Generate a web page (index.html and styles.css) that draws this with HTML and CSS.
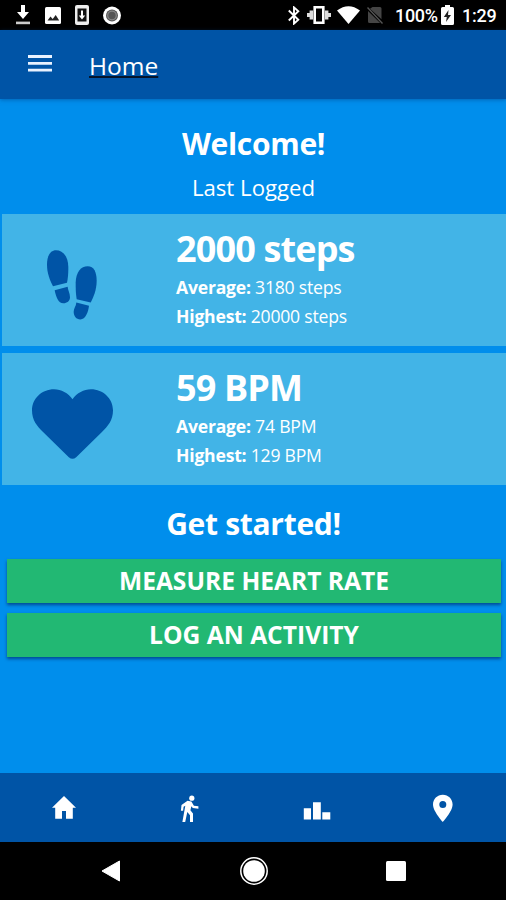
FILE: index.html
```
<!DOCTYPE html>
<html lang="en">
<head>
  <meta charset="UTF-8">
  <meta name="viewport" content="width=device-width, initial-scale=1">
  <title>Home</title>
  <link rel="stylesheet" href="styles.css">
</head>
<body>

  <!-- Status bar -->
  <div class="status-bar">
    <div class="status-left">
      <svg width="16" height="20" viewBox="0 0 16 20"><path d="M6 0h4v7h4l-6 7-6-7h4z" fill="#fff"/><path d="M1 16.6h14v2.6H1z" fill="#ccc"/></svg>
      <svg width="16" height="17" viewBox="0 0 16 17"><rect width="16" height="17" rx="1.5" fill="#fff"/><path d="M2.5 13.5l3-4 2.2 2.4 3-3.9 3.500 5.500z" fill="#222"/></svg>
      <svg width="14" height="20" viewBox="0 0 14 20"><rect width="14" height="20" rx="2" fill="#eee"/><path d="M2.5 3.5h9v13h-9z" fill="#111"/><path d="M6 5.5h2v5h2.2L7 14.5l-3.2-4H6z" fill="#fff"/></svg>
      <svg width="18" height="19" viewBox="0 0 18 19"><circle cx="9" cy="9.5" r="9" fill="#fff"/><circle cx="9" cy="9.5" r="6" fill="#555"/><circle cx="9" cy="9.5" r="4.3" fill="none" stroke="#888" stroke-width="1.2"/></svg>
    </div>
    <div class="status-right">
      <svg class="bluetooth" width="12" height="19" viewBox="0 0 12 19"><path d="M.8 4.5l9.5 9.3L6 17.6V1.4l4.3 3.8-9.500 9.300" fill="none" stroke="#fff" stroke-width="1.9"/></svg>
      <svg class="vibrate" width="24" height="18" viewBox="0 0 24 18"><path d="M7.700 1.300h8.600v15.400H7.700z" fill="none" stroke="#fff" stroke-width="2.600"/><path d="M2.600 4.500H6v9H2.600zM18 4.500h3.400v9H18zM0 7h2.700v4H0zM21.300 7H24v4h-2.700z" fill="#ddd"/></svg>
      <svg class="wifi" width="23" height="18" viewBox="0 0 23 18"><path d="M0 4.500Q11.500-4 23 4.500L11.500 18z" fill="#fff"/></svg>
      <svg class="no-sim" width="16" height="18" viewBox="0 0 16 18"><path d="M5.500 1H13q1.500 0 1.500 1.500v10.800L3 2.800zM1 5l12.200 12H2.500Q1 17 1 15.500z" fill="#454545"/><path d="M.5 1.500L15.500 17.500" stroke="#555" stroke-width="1.300"/></svg>
      <span class="percent">100%</span>
      <svg class="battery" width="13" height="20" viewBox="0 0 13 20"><path d="M4 0h5v2h2.500Q13 2 13 3.500v15q0 1.500-1.500 1.500h-10Q0 20 0 18.500v-15Q0 2 1.500 2H4z" fill="#fff"/><path d="M7.500 5L2.800 12h3L5 17l5-7H7z" fill="#222"/></svg>
      <span class="clock">1:29</span>
    </div>
  </div>

  <!-- App header -->
  <header class="header">
    <svg class="menu-icon" width="24" height="17" viewBox="0 0 24 17"><path d="M0 0h24v2.900H0zM0 6.900h24v2.900H0zM0 13.700h24v2.900H0z" fill="#e9f2ff"/></svg>
    <h1>Home</h1>
  </header>

  <main class="content">
    <h2 class="welcome">Welcome!</h2>
    <p class="last-logged">Last Logged</p>

    <section class="card">
      <div class="card-icon steps">
        <svg width="50" height="70" viewBox="141 420 150 209" fill="#0054a6">
          <path d="M168 420C149 420 141 440 141 463C141 490 150 511 159 528L201 518C204 503 205 490 205 472C205 438 188 420 168 420z"/>
          <path d="M164 540L203 530C203 538 210 550 210 561C210 572 201 579 190 579C175 579 168 560 164 540z"/>
          <path d="M263 468C282 468 290 486 290 512C290 540 280 562 272 577L230 567C227 548 227 534 227 517C228 485 243 468 263 468z"/>
          <path d="M229 577L267 587C265 605 257 628 241 628C229 628 221 618 221 605C221 594 228 589 229 577z"/>
        </svg>
      </div>
      <div class="card-text">
        <h3>2000 steps</h3>
        <p><b>Average:</b> 3180 steps</p>
        <p><b>Highest:</b> 20000 steps</p>
      </div>
    </section>

    <section class="card">
      <div class="card-icon">
        <svg width="81" height="70" viewBox="97 147 242 208" fill="#0054a6">
          <path d="M218 177C205 158 184 147 163 147C126 147 97 175 97 210C97 240 112 257 130 275L207 350Q218 360 229 350L306 275C324 257 339 240 339 210C339 175 310 147 273 147C252 147 231 158 218 177z"/>
        </svg>
      </div>
      <div class="card-text">
        <h3>59 BPM</h3>
        <p><b>Average:</b> 74 BPM</p>
        <p><b>Highest:</b> 129 BPM</p>
      </div>
    </section>

    <h2 class="get-started">Get started!</h2>
    <button class="btn measure">MEASURE HEART RATE</button>
    <button class="btn log">LOG AN ACTIVITY</button>
  </main>

  <!-- Tabs -->
  <nav class="tabs">
    <a><svg width="28" height="28" viewBox="0 0 28 28"><path d="M14 2L2 13.700h3.200v11H12V17h4v7.700h6.800v-11H26z" fill="#fff"/></svg></a>
    <a><svg width="28" height="28" viewBox="0 0 28 28"><circle cx="15.800" cy="4.200" r="2.600" fill="#fff"/><path d="M11.500 6.800l3.900.6 2.500 4.300 4.500.5v2.500l-5.600-.7-1.400-1.700-1 4 2.600 3.200v9H14v-7.300l-2.700-3.200-2.200 10.500H6.300l3-16.700-1.700 1-.5 4H4.900l.6-5.900z" fill="#fff"/></svg></a>
    <a><svg width="28" height="28" viewBox="0 0 28 28"><path d="M.8 14.200H8v11.300H.8zM10 8.200h7.800v17.300H10zM19.300 18.200h8v7.300h-8z" fill="#fff"/></svg></a>
    <a><svg width="28" height="29" viewBox="0 0 28 29"><path fill-rule="evenodd" d="M13.800 1.800C8.300 1.800 4 6 4 11.600C4 18.500 13.800 29 13.800 29S23.600 18.500 23.600 11.600C23.600 6 19.300 1.800 13.800 1.800zM13.800 8a3.500 3.500 0 1 1 0 7 3.500 3.500 0 1 1 0-7z" fill="#fff"/></svg></a>
  </nav>

  <!-- System buttons -->
  <div class="system-nav">
    <svg width="20" height="22" viewBox="0 0 20 22"><path d="M18.500 1v20L1 11z" fill="#fff" stroke="#fff" stroke-width="1" stroke-linejoin="round"/></svg>
    <svg width="30" height="30" viewBox="0 0 30 30"><circle cx="15" cy="15" r="13.200" fill="none" stroke="#fff" stroke-width="1.500"/><circle cx="15" cy="15" r="10.800" fill="#fff"/></svg>
    <svg width="20" height="20" viewBox="0 0 20 20"><rect width="20" height="20" rx="1.500" fill="#fff"/></svg>
  </div>

</body>
</html>
```
FILE: styles.css
```
* {
  box-sizing: border-box;
}

body {
  margin: 0;
  height: 900px;
  display: flex;
  flex-direction: column;
  font-family: 'Open Sans', 'Noto Sans', sans-serif;
  color: #fff;
  background: #008eec;
  overflow: hidden;
}

h1, h2, h3, p {
  margin: 0;
}

svg {
  display: block;
  flex: none;
}

/* Status bar */
.status-bar {
  height: 30px;
  flex: none;
  display: flex;
  justify-content: space-between;
  align-items: center;
  padding: 0 10px 0 15px;
  background: #000;
  font-family: Roboto, sans-serif;
  font-size: 18px;
  font-weight: 500;
}

.status-left,
.status-right {
  display: flex;
  align-items: center;
}

.status-left {
  gap: 14px;
}

.wifi {
  margin-left: 6px;
}

.vibrate {
  margin-left: 7px;
}

.no-sim {
  margin-left: 7px;
}

.percent {
  width: 43px;
  margin-left: 12px;
  letter-spacing: -0.3px;
}

.battery {
  margin-left: 3px;
}

.clock {
  width: 34px;
  margin-left: 8px;
  letter-spacing: -0.2px;
}

/* Header */
.header {
  height: 69px;
  flex: none;
  display: flex;
  align-items: center;
  padding: 0 28px;
  background: #0054a6;
  box-shadow: 0 1px 4px rgba(0, 60, 130, 0.5);
  z-index: 1;
}

.menu-icon {
  margin-top: -3px;
}

.header h1 {
  margin: 2px 0 0 37px;
  font-size: 24.5px;
  font-weight: 400;
  line-height: 33px;
  text-decoration: underline;
  text-decoration-color: #06152b;
  text-decoration-thickness: 2px;
  text-underline-offset: 1px;
}

/* Page content */
.content {
  flex: 1;
  padding-top: 24px;
  text-align: center;
}

.content h2 {
  padding-left: 1px;
  font-size: 30px;
  font-weight: 700;
  line-height: 41px;
  letter-spacing: -0.3px;
}

.last-logged {
  margin-top: 9px;
  padding-left: 1px;
  font-size: 22.2px;
  line-height: 30px;
}

.card {
  display: flex;
  height: 132px;
  margin: 11px 0 0 2px;
  background: #42b4e7;
  text-align: left;
}

.card + .card {
  margin-top: 7px;
}

.card-icon {
  width: 141px;
  display: flex;
  align-items: center;
  justify-content: center;
  padding-top: 9px;
}

.card-icon.steps {
  padding-right: 2px;
}

.card-text {
  padding: 10px 0 0 33px;
}

.card h3 {
  font-size: 36px;
  font-weight: 700;
  line-height: 49px;
  letter-spacing: -0.85px;
}

.card p {
  font-size: 17.6px;
  line-height: 29px;
  letter-spacing: -0.22px;
}

.content .get-started {
  margin-top: 18px;
}

.btn {
  display: block;
  width: 494px;
  height: 44px;
  margin: 15px 0 0 7px;
  padding: 0 0 1px;
  border: none;
  background: #22b873;
  color: #fff;
  font-family: inherit;
  font-size: 24.6px;
  font-weight: 700;
  box-shadow: 0 2px 3px rgba(0, 30, 90, 0.6);
}

.btn + .btn {
  margin-top: 10px;
}

/* Tabs */
.tabs {
  height: 69px;
  flex: none;
  display: flex;
  background: #0054a6;
}

.tabs a {
  flex: 1;
  display: flex;
  align-items: center;
  justify-content: center;
  padding-left: 1px;
}

/* System buttons */
.system-nav {
  height: 58px;
  flex: none;
  display: flex;
  align-items: center;
  justify-content: space-between;
  padding: 0 100px 0 101px;
  background: #000;
}
```
